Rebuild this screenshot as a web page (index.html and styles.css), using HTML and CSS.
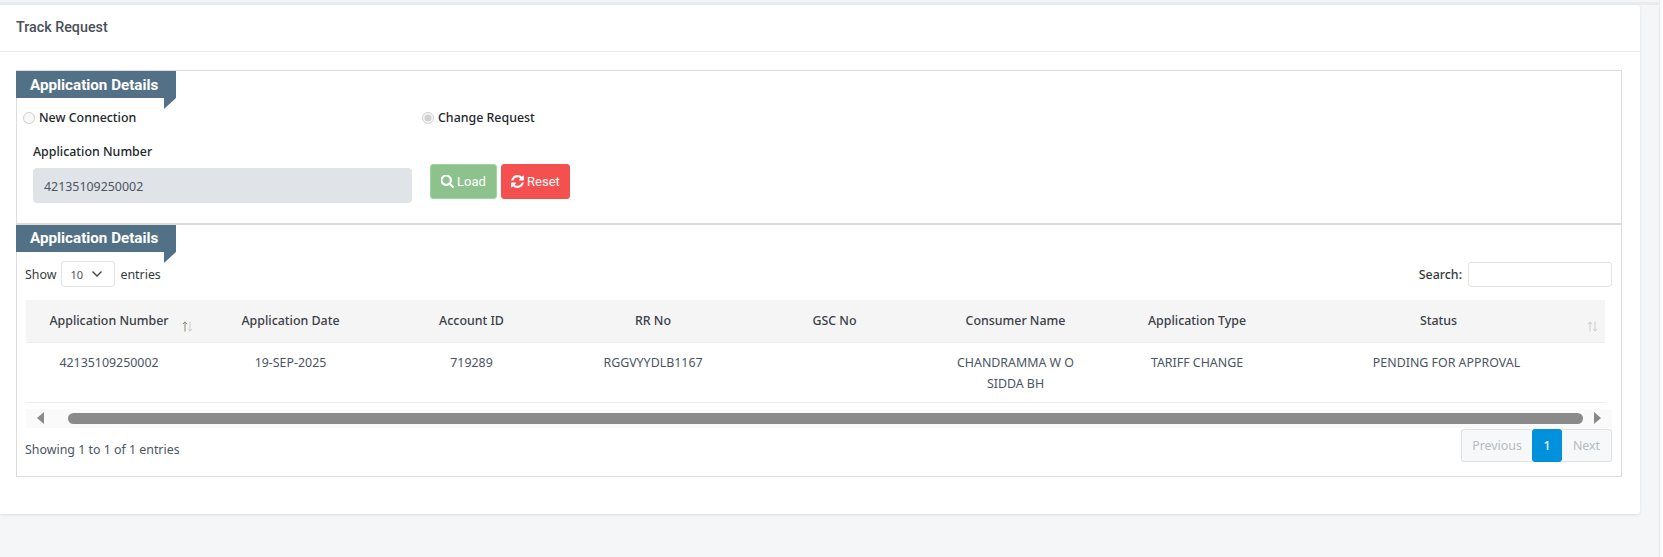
FILE: index.html
```html
<!DOCTYPE html>
<html lang="en">
<head>
<meta charset="utf-8">
<title>Track Request</title>
<link rel="stylesheet" href="styles.css">
</head>
<body>
<main class="main">
  <div class="topline"></div>
  <section class="card">
    <header class="card-head">Track Request</header>
    <div class="card-body">
      <div class="box">
        <div class="section section-form">
          <h2 class="banner">Application Details</h2>
          <div class="radios">
            <label class="radio radio-first"><input type="radio" name="kind" disabled>New Connection</label>
            <label class="radio"><input type="radio" name="kind" checked disabled>Change Request</label>
          </div>
          <div class="form-row">
            <div class="field">
              <label class="field-label" for="appno">Application Number</label>
              <input class="field-input" id="appno" value="42135109250002" readonly>
            </div>
            <div class="actions">
              <button class="btn btn-load" type="button"><svg class="btn-icon" viewBox="128 192 1600 1600"><path fill="currentColor" d="M1216 832q0-185-131.5-316.5t-316.5-131.5-316.5 131.5-131.5 316.5 131.5 316.5 316.5 131.5 316.5-131.5 131.5-316.5zm512 832q0 52-38 90t-90 38q-54 0-90-38l-343-342q-179 124-399 124-143 0-273.5-55.5t-225-150-150-225-55.5-273.5 55.5-273.5 150-225 225-150 273.5-55.5 273.5 55.5 225 150 150 225 55.5 273.5q0 220-124 399l343 343q37 37 37 90z"/></svg>Load</button>
              <button class="btn btn-reset" type="button"><svg class="btn-icon" viewBox="0 0 1536 1536"><path fill="currentColor" d="M1511 928q0 5-1 7-64 268-268 434.5t-478 166.5q-146 0-282.5-55t-243.5-157l-129 129q-19 19-45 19t-45-19-19-45v-448q0-26 19-45t45-19h448q26 0 45 19t19 45-19 45l-137 137q71 66 161 102t187 36q134 0 250-65t186-179q11-17 53-117 8-23 30-23h192q13 0 22.5 9.5t9.5 22.5zm25-800v448q0 26-19 45t-45 19h-448q-26 0-45-19t-19-45 19-45l138-138q-148-137-349-137-134 0-250 65t-186 179q-11 17-53 117-8 23-30 23h-199q-13 0-22.5-9.5t-9.5-22.5v-7q65-268 270-434.5t480-166.5q146 0 284 55.5t245 156.5l130-129q19-19 45-19t45 19 19 45z"/></svg>Reset</button>
            </div>
          </div>
        </div>
        <div class="section section-list">
          <h2 class="banner">Application Details</h2>
          <div class="tools">
            <div class="length">Show
              <span class="length-select">10<svg class="chevron" viewBox="0 0 12 8"><path d="M1.5 1.5 6 6l4.5-4.5" fill="none" stroke="#444" stroke-width="1.4"/></svg></span>
              entries</div>
            <label class="search">Search:<input class="search-input" type="search"></label>
          </div>
          <table class="data">
            <colgroup>
              <col class="c1"><col class="c2"><col class="c2"><col class="c4"><col class="c2"><col class="c2"><col class="c4"><col class="c8">
            </colgroup>
            <thead>
              <tr>
                <th class="first">Application Number<svg class="sort" viewBox="0 0 11 11"><path d="M3 10.5V1M1 3.2 3 .8l2 2.4" fill="none" stroke="#8f8776" stroke-width="1"/><path d="M8 .5V10M6 7.8l2 2.4 2-2.4" fill="none" stroke="#ccc" stroke-width="1"/></svg></th>
                <th>Application Date</th>
                <th>Account ID</th>
                <th>RR No</th>
                <th>GSC No</th>
                <th>Consumer Name</th>
                <th>Application Type</th>
                <th class="last">Status<svg class="sort" viewBox="0 0 11 11"><path d="M3 10.5V1M1 3.2 3 .8l2 2.4" fill="none" stroke="#ccc" stroke-width="1"/><path d="M8 .5V10M6 7.8l2 2.4 2-2.4" fill="none" stroke="#ccc" stroke-width="1"/></svg></th>
              </tr>
            </thead>
            <tbody>
              <tr>
                <td class="first">42135109250002</td>
                <td>19-SEP-2025</td>
                <td>719289</td>
                <td>RGGVYYDLB1167</td>
                <td></td>
                <td class="name">CHANDRAMMA W O SIDDA BH</td>
                <td>TARIFF CHANGE</td>
                <td>PENDING FOR APPROVAL</td>
              </tr>
            </tbody>
          </table>
          <div class="hscroll">
            <span class="arrow arrow-left"></span>
            <span class="thumb"></span>
            <span class="arrow arrow-right"></span>
          </div>
          <div class="foot">
            <div class="info">Showing 1 to 1 of 1 entries</div>
            <nav class="pager">
              <span class="page page-prev">Previous</span>
              <span class="page page-on">1</span>
              <span class="page page-next">Next</span>
            </nav>
          </div>
        </div>
      </div>
    </div>
  </section>
</main>
<div class="gutter"></div>
</body>
</html>
```
FILE: styles.css
```css
* { box-sizing: border-box; }
html, body { height: 100%; }
body {
  margin: 0;
  display: flex;
  height: 557px;
  overflow: hidden;
  background: #f5f6f8;
  font-family: "Noto Sans", "Open Sans", sans-serif;
  font-size: 12.4px;
  color: #4b5563;
}
.main { flex: 1; min-width: 0; padding-top: 2px; }
.gutter { width: 4px; border-left: 1px solid #e8e9ec; background: #fafafb; }
.topline { height: 3px; background: #e9ebee; }
.card {
  width: 1640px;
  background: #fff;
  border-radius: 0 3px 3px 0;
  box-shadow: 0 1px 3px rgba(40, 50, 70, .12);
}
.card-head {
  height: 47px;
  padding: 0 16px 2px;
  display: flex;
  align-items: center;
  border-bottom: 1px solid #ebedf0;
  font-family: Roboto, sans-serif;
  font-weight: 500;
  font-size: 14.3px;
  color: #4a5058;
}
.card-body { padding: 18px 18px 37px 16px; }
.box { border: 1px solid #dcdcdc; }
.section-form { height: 154px; border-bottom: 2px solid #dcdcdc; }
.banner {
  position: relative;
  width: 160px;
  height: 27px;
  margin: 0 0 0 -1px;
  padding-left: 14px;
  background: #527186;
  color: #fff;
  font-family: Roboto, sans-serif;
  font-size: 15.2px;
  font-weight: 700;
  line-height: 28px;
}
.section-list .banner { line-height: 26px; }
.banner::after {
  content: "";
  position: absolute;
  right: 0;
  top: 27px;
  border-top: 11px solid #527186;
  border-right: 12px solid transparent;
}
.radios { display: flex; height: 22px; margin-top: 9px; padding-left: 6px; }
.radio {
  display: flex;
  align-items: center;
  gap: 4px;
  font-weight: 500;
  color: #23272c;
  line-height: 22px;
}
.radio-first { width: 399px; }
.radio input { width: 12px; height: 12px; margin: 0; }
.form-row { display: flex; gap: 18px; padding-left: 16px; margin-top: 14px; }
.field { width: 379px; }
.field-label {
  display: block;
  height: 18px;
  line-height: 18px;
  font-weight: 500;
  color: #23272c;
}
.field-input {
  display: block;
  width: 100%;
  height: 35px;
  margin-top: 7px;
  padding: 2px 11px 0;
  border: 0;
  border-radius: 4px;
  background: #e0e3e7;
  font: inherit;
  color: #4b5563;
  outline: none;
}
.actions { display: flex; gap: 4px; margin-top: 21px; }
.btn {
  display: flex;
  align-items: center;
  justify-content: center;
  gap: 3px;
  height: 35px;
  padding: 0;
  border-radius: 3px;
  color: #fff;
  font-family: Roboto, sans-serif;
  font-size: 13px;
}
.btn-load { width: 67px; background: #8dc28d; border: 1px solid #9ad6a4; }
.btn-reset { width: 69px; background: #f55050; border: 1px solid #f55050; }
.btn-icon { width: 13px; height: 13px; }
.tools {
  display: flex;
  justify-content: space-between;
  align-items: center;
  height: 26px;
  margin-top: 9px;
  padding: 0 9px 0 8px;
}
.length { display: flex; align-items: center; gap: 5px; color: #343a40; }
.length-select {
  display: flex;
  align-items: center;
  justify-content: space-between;
  width: 54px;
  height: 26px;
  padding: 0 11px 0 8px;
  border: 1px solid #e2e4e7;
  border-radius: 3px;
  font-size: 11px;
  color: #555;
}
.chevron { width: 12px; height: 8px; }
.search { display: flex; align-items: center; gap: 6px; font-weight: 500; color: #343a40; }
.search-input {
  width: 144px;
  height: 25px;
  border: 1px solid #e2e4e7;
  border-radius: 3px;
  outline: none;
  background: #fff;
}
.data {
  width: 1579px;
  margin: 13px 0 0 9px;
  table-layout: fixed;
  border-collapse: collapse;
  color: #4b5563;
}
.c1 { width: 174px; }
.c2 { width: 181px; }
.c4 { width: 182px; }
.c8 { width: 317px; }
.data th {
  position: relative;
  height: 42px;
  padding: 0 0 1px;
  background: #f5f5f5;
  border-bottom: 1px solid #ebedf0;
  font-weight: 500;
  color: #3a4048;
  text-align: center;
}
.data td {
  height: 59px;
  padding: 9px 0 8px;
  border-bottom: 1px solid #ebedf0;
  line-height: 21px;
  text-align: center;
  vertical-align: top;
}
.data .first { padding-right: 8px; }
.data .last { padding-right: 16px; }
.data .name { padding-left: 28px; padding-right: 28px; }
.sort { position: absolute; width: 11px; height: 11px; top: 21px; }
.first .sort { left: 156px; }
.last .sort { right: 7px; }
.hscroll {
  display: flex;
  align-items: center;
  width: 1586px;
  height: 19px;
  margin: 6px 0 0 9px;
  background: #fafafa;
}
.thumb { width: 1515px; height: 11px; margin: 0 11px 0 24px; border-radius: 6px; background: #8a8a8a; }
.arrow { width: 0; height: 0; border-top: 6px solid transparent; border-bottom: 6px solid transparent; }
.arrow-left { margin-left: 11px; border-right: 7px solid #8a8a8a; }
.arrow-right { border-left: 7px solid #8a8a8a; }
.foot {
  display: flex;
  justify-content: space-between;
  align-items: center;
  height: 33px;
  margin-top: 1px;
  padding: 0 9px 0 8px;
  margin-bottom: 14px;
}
.info { padding-top: 8px; color: #4b5563; }
.pager { display: flex; height: 33px; }
.page {
  display: flex;
  align-items: center;
  justify-content: center;
  border: 1px solid #dee2e6;
  background: #f7f8fa;
  color: #b4bcc4;
}
.page-prev { width: 71px; border-radius: 3px 0 0 3px; border-right: 0; }
.page-next { width: 50px; border-radius: 0 3px 3px 0; border-left: 0; }
.page-on { width: 30px; border: 0; border-radius: 3px; background: #0090dc; color: #e8f4fb; font-weight: 500; }
```
